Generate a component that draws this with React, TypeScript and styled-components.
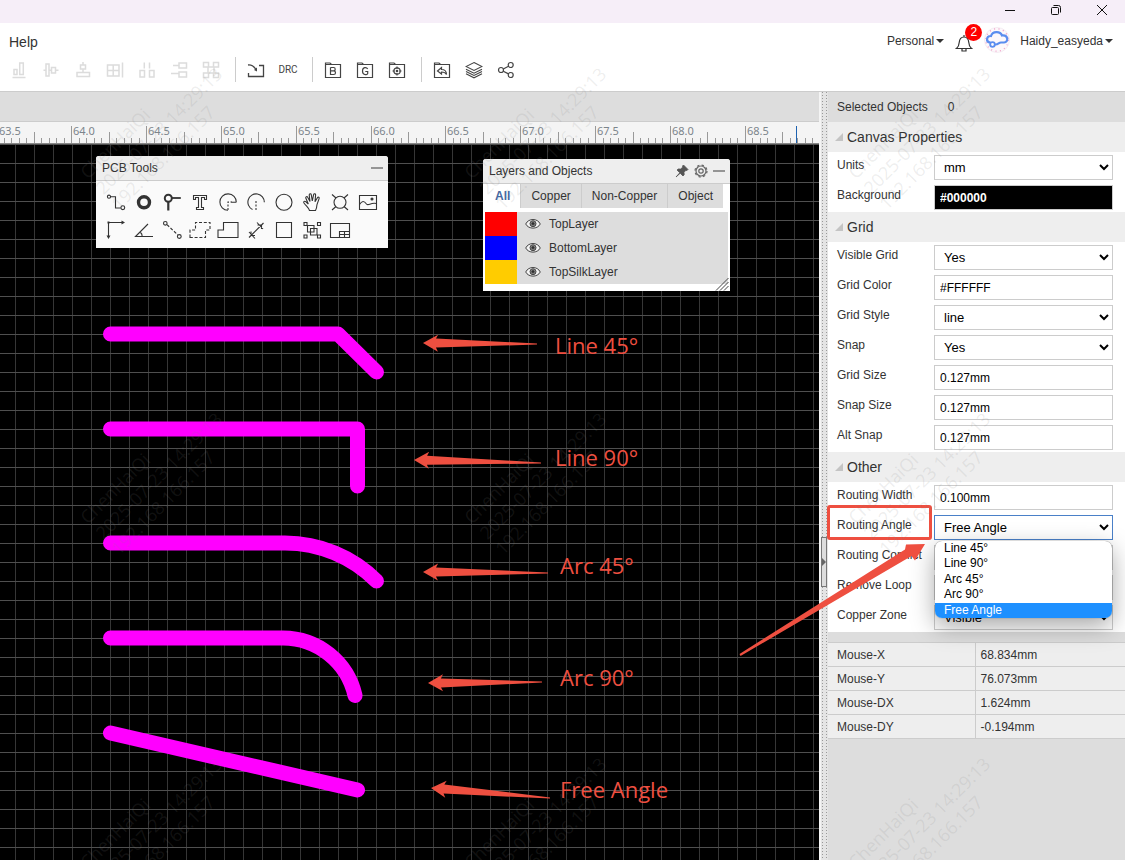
import React from "react";
import styled, { createGlobalStyle, css } from "styled-components";

const red = "#ee4f40";
const sans = `"Liberation Sans", Arial, sans-serif`;

const GlobalStyle = createGlobalStyle`
  *, *::before, *::after { box-sizing: border-box; }
  body { margin: 0; font: 12px/16px ${sans}; color: #333; background: #ddd; }
  button, input, select { font-family: inherit; }
  button { border: 0; padding: 0; background: none; color: inherit; }
`;

const Page = styled.div`
  position: relative;
  display: flex;
  flex-direction: column;
  min-height: 100vh;
  overflow: hidden;
`;

/* ---------- window frame ---------- */

const TitleBar = styled.div`
  display: flex;
  justify-content: flex-end;
  height: 23px;
  background: #f6eef8;
`;

const WindowButton = styled.button`
  display: grid;
  place-items: center;
  width: 46px;
  height: 20px;
`;

const Header = styled.header`
  display: flex;
  justify-content: space-between;
  height: 69px;
  background: #fff;
  border-bottom: 1px solid #ccc;
`;

const HeaderLeft = styled.div`
  display: flex;
  flex-direction: column;
`;

const MenuButton = styled.button`
  align-self: flex-start;
  padding: 0 9px;
  margin-top: 9px;
  height: 20px;
  font-size: 14px;
`;

const Toolbar = styled.div`
  display: flex;
  align-items: center;
  height: 36px;
  padding-left: 3px;
`;

const ToolbarButton = styled.button<{ $muted?: boolean }>`
  display: grid;
  place-items: center;
  width: 32px;
  height: 28px;
  color: ${(p) => (p.$muted ? "#dcdcdc" : "#444")};
`;

const DrcText = styled.span`
  font: 10px/12px Roboto, sans-serif;
`;

const Separator = styled.span`
  width: 1px;
  height: 25px;
  margin: 0 4px 2px 8px;
  background: #ccc;
`;

const Account = styled.div`
  display: flex;
  align-items: center;
  height: 36px;
  padding-right: 12px;
`;

const AccountButton = styled.button`
  display: flex;
  align-items: center;
  gap: 2px;
  font-size: 12px;
`;

const Caret = styled.span`
  border: 4px solid transparent;
  border-top-color: #333;
  border-bottom: 0;
`;

const BellButton = styled.button`
  position: relative;
  display: flex;
  margin: 4px 11px 0 11px;
`;

const Badge = styled.span`
  position: absolute;
  top: -10px;
  right: -9px;
  width: 17px;
  height: 17px;
  border-radius: 50%;
  background: #f00;
  color: #fff;
  font-size: 12px;
  line-height: 17px;
  text-align: center;
`;

const Avatar = styled.svg`
  margin: 0 10px 2px 0;
`;

/* ---------- work area ---------- */

const Body = styled.div`
  display: flex;
  flex: 1;
`;

const Workspace = styled.main`
  display: flex;
  flex: 1;
  flex-direction: column;
  min-width: 0;
`;

const TabStrip = styled.div`
  height: 30px;
  background: #ddd;
  border-bottom: 1px solid #ccc;
`;

const Ruler = styled.svg`
  display: block;
  width: 100%;
  height: 22px;
  background: #f4f4f4;
  border-bottom: 1px solid #888;
  font: 11px "Noto Sans", sans-serif;
`;

const Canvas = styled.div`
  position: relative;
  flex: 1;
  overflow: hidden;
  background-color: #000;
  background-image: linear-gradient(#4f4f4f 1px, transparent 1px),
    linear-gradient(90deg, #363636 1px, transparent 1px);
  background-size: 19px 19px;
  background-position: 15px 0;
`;

const Drawing = styled.svg`
  position: absolute;
  inset: 0;
  width: 100%;
  height: 100%;
`;

const Note = styled.span<{ $x: number; $y: number }>`
  position: absolute;
  left: ${(p) => p.$x}px;
  top: ${(p) => p.$y}px;
  color: ${red};
  font: 22px/30px "Open Sans", sans-serif;
  white-space: nowrap;
`;

const FloatPanel = styled.section<{ $x: number; $y: number; $w: number }>`
  position: absolute;
  left: ${(p) => p.$x}px;
  top: ${(p) => p.$y}px;
  width: ${(p) => p.$w}px;
  background: #fafafa;
  border-radius: 3px 3px 0 0;
`;

const PanelHeader = styled.header`
  display: flex;
  align-items: center;
  gap: 5px;
  height: 25px;
  padding: 0 5px 0 6px;
  background: #eee;
  border-bottom: 1px solid #ccc;
  border-radius: 3px 3px 0 0;
`;

const PanelTitle = styled.h2`
  flex: 1;
  margin: 0;
  font-size: 12px;
  font-weight: 400;
`;

const PanelButton = styled.button`
  display: flex;
`;

const ToolGrid = styled.div`
  display: grid;
  grid-template-columns: repeat(10, 28px);
  grid-auto-rows: 28px;
  padding: 7px 6px 4px;
`;

const ToolButton = styled.button`
  display: grid;
  place-items: center;
`;

const LayerBody = styled.div`
  padding: 0 2px 7px;
  background: #fff;
`;

const Tabs = styled.div`
  display: flex;
  gap: 1px;
  margin: 0 5px 4px 0;
  background: #ccc;
`;

const Tab = styled.button<{ $active?: boolean }>`
  flex: 1 1 auto;
  height: 24px;
  background: #ddd;
  font-size: 12px;
  ${(p) =>
    p.$active &&
    css`
      background: #fff;
      color: #4468a2;
      font-weight: 700;
    `}
`;

const LayerRow = styled.div`
  display: flex;
  align-items: center;
  height: 24px;
  background: #ddd;
`;

const Swatch = styled.span<{ $color: string }>`
  align-self: stretch;
  width: 32px;
  margin-right: 8px;
  background: ${(p) => p.$color};
`;

const EyeButton = styled.button`
  display: flex;
  margin-right: 8px;
`;

const ResizeGrip = styled.svg`
  position: absolute;
  right: 1px;
  bottom: 0;
`;

/* ---------- properties ---------- */

const Splitter = styled.div`
  position: relative;
  width: 9px;
  border-left: 2px solid #f4f4f4;
  background-image: linear-gradient(
      90deg,
      #e4e4e4 1px,
      transparent 1px 2px,
      #e4e4e4 2px 5px,
      transparent 5px 6px,
      #e4e4e4 6px
    ),
    linear-gradient(#999 1px, #e4e4e4 1px);
  background-size: 100% 3px;
`;

const Collapse = styled.button`
  position: absolute;
  top: 445px;
  left: 0;
  display: flex;
  align-items: center;
  width: 6px;
  height: 50px;
  background: #ddd;
  border: 1px solid #777;
`;

const CollapseMark = styled.span`
  border: 4px solid transparent;
  border-left-color: #666;
  border-right: 0;
`;

const Side = styled.aside`
  width: 297px;
  background: #ddd;
`;

const Selection = styled.p`
  display: flex;
  gap: 20px;
  margin: 0;
  padding: 0 9px;
  line-height: 30px;
`;

const Section = styled.section`
  background: #fff;
`;

const SectionTitle = styled.h3`
  display: flex;
  align-items: center;
  gap: 4px;
  height: 30px;
  margin: 0;
  padding-left: 7px;
  background: #eee;
  font-size: 14px;
  font-weight: 400;
`;

const Fold = styled.span`
  border: 4px solid #c4c4c4;
  border-left-color: transparent;
  border-top-color: transparent;
`;

const Row = styled.div`
  position: relative;
  display: grid;
  grid-template-columns: 97px 1fr;
  height: 30px;
  padding: 3px 12px 0 9px;
`;

const Label = styled.label`
  line-height: 20px;
`;

const control = css`
  width: 100%;
  height: 25px;
  border: 1px solid #ccc;
  border-radius: 0;
  background-color: #fff;
  color: #000;
  outline: 0;
`;

const TextInput = styled.input<{ $dark?: boolean }>`
  ${control}
  padding: 0 5px;
  font-size: 12px;
  ${(p) =>
    p.$dark &&
    css`
      background-color: #000;
      color: #fff;
      font-weight: 700;
    `}
`;

const Select = styled.select<{ $open?: boolean }>`
  ${control}
  padding: 0 0 0 5px;
  font-size: 13px;
  border-color: ${(p) => (p.$open ? "#4a80c8" : "#ccc")};
`;

const Options = styled.ul`
  position: absolute;
  z-index: 2;
  top: 29px;
  left: 107px;
  right: 13px;
  display: flex;
  flex-direction: column;
  height: 77px;
  margin: 0;
  padding: 0;
  overflow: hidden;
  list-style: none;
  color: #000;
  background: #fff;
  border-radius: 7px;
  box-shadow: 0 8px 24px rgba(0, 0, 0, 0.35), 0 0 1px rgba(0, 0, 0, 0.6);
`;

const Option = styled.li<{ $active: boolean }>`
  flex: 1;
  padding-left: 9px;
  line-height: 15px;
  ${(p) =>
    p.$active &&
    css`
      background: #1e90ff;
      color: #fff;
    `}
`;

const Highlight = styled.span`
  position: absolute;
  z-index: 3;
  top: -7px;
  left: -1px;
  width: 105px;
  height: 35px;
  border: 3px solid ${red};
  border-radius: 3px;
  pointer-events: none;
`;

const Pointer = styled.svg`
  position: absolute;
  z-index: 3;
  top: 30px;
  left: -90px;
  pointer-events: none;
`;

const MouseTable = styled.table`
  width: 100%;
  margin-top: 10px;
  border-collapse: collapse;
  background: #eee;

  th,
  td {
    height: 24px;
    padding: 0 0 0 5px;
    border: solid #ccc;
    border-width: 1px 0;
    font-weight: 400;
    text-align: left;
  }
  th {
    width: 147px;
    padding-left: 9px;
    border-right-width: 1px;
  }
`;

/* ---------- watermark ---------- */

const Watermarks = styled.div`
  position: absolute;
  z-index: 5;
  inset: 0;
  overflow: hidden;
  pointer-events: none;
`;

const Watermark = styled.div<{ $col: number; $row: number }>`
  position: absolute;
  left: ${(p) => 73 + p.$col * 384}px;
  top: ${(p) => 96 + p.$row * 345}px;
  width: 174px;
  transform: rotate(-45deg);
  color: rgba(128, 128, 128, 0.14);
  font: 18px/22px "Open Sans", sans-serif;
  white-space: nowrap;
`;

/* ---------- icons ---------- */

const Icon = ({ size = 18, box = "0 0 18 18", sw = 1.2, children }: {
  size?: number; box?: string; sw?: number; children: React.ReactNode;
}) => (
  <svg width={size} height={size} viewBox={box} fill="none" stroke="currentColor" strokeWidth={sw} aria-hidden="true">
    {children}
  </svg>
);

const alignIcons: [string, React.ReactNode][] = [
  ["Align bottom", <path d="M2.5 16.5h13M4 8.500h3v5H4zM9.700 2h3.600v11.500H9.700z" />],
  ["Align middle", <path d="M4 3h3v12H4zM9.500 6.500h4v5.500h-4zM1.500 9.200H4M7 9.200h2.500M13.500 9.200h3" />],
  ["Align center", <path d="M6.500 4h5v4h-5zM3 11.500h12.500v4H3zM9 1v3M9 8v3.500" />],
  ["Align grid", <path d="M1.500 4h11.500v11H1.500zM1.500 9.500H13M7.200 4v11M16.500 1.500v15" />],
  ["Distribute horizontally", <path d="M2 9.500h4.500v6.500H2zM11.500 9.500H16v6.500h-4.500zM6.300 1.500v6M11.500 1.500v6" />],
  ["Distribute vertically", <path d="M9 2h7.500v5H9zM9 11h7.500v5H9zM3 4.500h6M1 12.500h8" />],
  ["Array", <path d="M1.500 1.500h5v4.500h-5zM11.500 1.500h5v4.500h-5zM1.500 12h5v4.500h-5zM11.500 12h5v4.500h-5zM6 6h6v6H6z" />],
];

const folder = <path d="M1.500 16.500V2h4.500l1.500 1.500h9v13zM1.500 3.500h6" />;

const toolIcons: [string, React.ReactNode][] = [
  ["Track", <><circle cx="3" cy="4.700" r="1.600" /><path d="M4.800 4.700h4.700V16h5.300" /><circle cx="16.800" cy="15.700" r="1.900" /></>],
  ["Pad", <circle cx="10" cy="10.300" r="5.500" strokeWidth="3.400" />],
  ["Via", <><circle cx="6.300" cy="6.200" r="3.500" strokeWidth="2" /><path d="M9.800 6h9" strokeWidth="1.800" /><path d="M6.300 9.500v9" strokeWidth="2.200" /></>],
  ["Text", <path d="M3.500 3.500h13v4h-2v-2h-3v10h2v2h-7v-2h2v-10h-3v2h-2z" />],
  ["Arc by center", <><path d="M18.300 10.300A8.200 8.200 0 1 0 10 18.300M18.300 10.300h-5" /><path d="M10 18v-8h4" strokeDasharray="2 1.500" /></>],
  ["Arc", <><path d="M18.300 10.300A8.200 8.200 0 1 0 6.500 17.500" /><path d="M10 18v-9" strokeDasharray="2 1.500" /></>],
  ["Circle", <circle cx="10" cy="10.300" r="8" />],
  ["Drag", <path d="M7.500 18.500C6.500 15.500 4 14 1.800 10.800c-.5-1.200.9-2 1.900-1.100L6.300 12 3.800 6c-.4-1.300 1.300-1.900 1.900-.7L8 9.500 7.200 2.900c0-1.400 1.900-1.500 2.100-.1L10.300 9l1.300-6.400c.4-1.300 2.200-.9 2 .4L13 9.700l2.400-4c.8-1.100 2.200-.3 1.700.9L15 12.500c-.2 2.500-.5 4.500-1.500 6z" />],
  ["Hole", <><circle cx="10" cy="10.300" r="6" /><path d="M2 2.500l4 3.500M18 2.500 14 6M2 18l4-3.500M18 18l-4-3.500" /></>],
  ["Image", <><path d="M1.500 3.500h17v14h-17z" /><path d="M1.500 12.500C4 8.500 6 8.500 8.500 12c2 2.500 4-2 10-.5" /><circle cx="14" cy="7" r="1" fill="currentColor" /></>],
  ["Canvas origin", <><path d="M2.500 2.500h15M2.500 2.500v15" /><path d="M15.500.5l3.500 2-3.500 2zM.5 15.500l2 3.500 2-3.500zM1.500 1.500h2v2h-2z" fill="currentColor" stroke="none" /></>],
  ["Protractor", <path d="M14 4 1.500 16.500H19M6.500 12.500c1.300 1 1.700 2.200 1.700 4" />],
  ["Connect pads", <><circle cx="3.300" cy="3.300" r="1.800" /><circle cx="17.300" cy="16.500" r="1.900" /><path d="M5 4.700 16 15" strokeDasharray="3 1.800" /></>],
  ["Copper area", <path d="M0 17.500V10h5.500V2.500H20V10h-4.500v7.500z" strokeDasharray="3 1.800" />],
  ["Solid region", <path d="M0 17.500V10h5.500V2.500H20v15z" />],
  ["Dimension", <path d="M5 15.500 15.500 5M3 12l6 6.500M11 2.500l6 6.500M4.500 10.500v0M5 11.500v4h4M11.500 5h4v4M15.500 5l2-2M5 15.500l-2 2" />],
  ["Rectangle", <path d="M2.500 2.500h15v15h-15z" />],
  ["Group", <><path d="M2 2.500h3v3H2zM15.500 2.500h3v3h-3zM2 15h3v3H2zM15.500 15h3v3h-3z" /><path d="M5.500 5.500h6.500v6.500H5.500zM8.500 8.500H15v6.500H8.500z" /></>],
  ["Panelize", <path d="M.5 3.500h19v14H.5zM9.500 17.500v-6h10M9.500 14.500h10M14.500 11.500v6" />],
];

/* ---------- data ---------- */

const layers = [
  ["TopLayer", "#ff0000"],
  ["BottomLayer", "#0000ff"],
  ["TopSilkLayer", "#ffcc00"],
];

type Field = { label: string; value: string; kind?: "select" | "dark"; open?: boolean };

const sections: { title: string; fields: Field[] }[] = [
  {
    title: "Canvas Properties",
    fields: [
      { label: "Units", value: "mm", kind: "select" },
      { label: "Background", value: "#000000", kind: "dark" },
    ],
  },
  {
    title: "Grid",
    fields: [
      { label: "Visible Grid", value: "Yes", kind: "select" },
      { label: "Grid Color", value: "#FFFFFF" },
      { label: "Grid Style", value: "line", kind: "select" },
      { label: "Snap", value: "Yes", kind: "select" },
      { label: "Grid Size", value: "0.127mm" },
      { label: "Snap Size", value: "0.127mm" },
      { label: "Alt Snap", value: "0.127mm" },
    ],
  },
  {
    title: "Other",
    fields: [
      { label: "Routing Width", value: "0.100mm" },
      { label: "Routing Angle", value: "Free Angle", kind: "select", open: true },
      { label: "Routing Conflict", value: "", kind: "select" },
      { label: "Remove Loop", value: "", kind: "select" },
      { label: "Copper Zone", value: "Visible", kind: "select" },
    ],
  },
];

const angles = ["Line 45°", "Line 90°", "Arc 45°", "Arc 90°", "Free Angle"];

const mouse = [
  ["Mouse-X", "68.834mm"],
  ["Mouse-Y", "76.073mm"],
  ["Mouse-DX", "1.624mm"],
  ["Mouse-DY", "-0.194mm"],
];

// label, label position, arrow tip and arrow tail, in canvas pixels
const notes: [string, number, number, number, number, number, number][] = [
  ["Line 45°", 555, 186, 423, 199, 537, 200],
  ["Line 90°", 555, 298, 414, 316, 541, 319],
  ["Arc 45°", 560, 406, 423, 428, 548, 429],
  ["Arc 90°", 560, 518, 428, 539, 542, 538],
  ["Free Angle", 560, 630, 431, 644, 550, 654],
];

const traces = [
  "M110.500 190H338L376.500 228",
  "M110.500 285H357.500V342",
  "M110.500 399H285A129.500 129.500 0 0 1 376.500 437",
  "M110.500 494H283A74 74 0 0 1 355 551.500",
  "M110.500 589 357.500 646",
];

const Arrow = ({ x1, y1, x2, y2 }: { x1: number; y1: number; x2: number; y2: number }) => {
  const len = Math.hypot(x2 - x1, y2 - y1);
  const deg = (Math.atan2(y2 - y1, x2 - x1) * 180) / Math.PI;
  return (
    <path
      d={`M0 0 15 -8.500 13 -4.500 ${len} -.5V.5L13 4.500 15 8.500Z`}
      transform={`translate(${x1} ${y1}) rotate(${deg})`}
      fill={red}
    />
  );
};

const rulerStart = -3.5;
const rulerStep = 74.83;

const RulerScale = () => (
  <Ruler aria-label="Horizontal ruler">
    {Array.from({ length: 110 }, (_, i) => {
      const h = i % 10 === 0 ? 18 : i % 5 === 0 ? 12 : 6;
      const x = Math.round(rulerStart + (i * rulerStep) / 10) + 0.5;
      return <path key={i} d={`M${x} 22v-${h}`} stroke="#999" />;
    })}
    {Array.from({ length: 11 }, (_, i) => (
      <text key={i} x={Math.round(rulerStart + i * rulerStep) + 2} y="13" fill="#7c858c">
        {(63.5 + i * 0.5).toFixed(1)}
      </text>
    ))}
    <path d="M796.500 4v18" stroke="#1e62b0" />
  </Ruler>
);

const FieldRow = ({ label, value, kind, open }: Field) => {
  const id = label.toLowerCase().replace(/ /g, "-");
  return (
    <Row>
      <Label htmlFor={id}>{label}</Label>
      {kind === "select" ? (
        <Select id={id} defaultValue={value} $open={open}>
          {open ? angles.map((a) => <option key={a}>{a}</option>) : <option>{value}</option>}
        </Select>
      ) : (
        <TextInput id={id} defaultValue={value} $dark={kind === "dark"} />
      )}
      {open && (
        <>
          <Options role="listbox" aria-label={label}>
            {angles.map((a) => (
              <Option key={a} role="option" aria-selected={a === value} $active={a === value}>
                {a}
              </Option>
            ))}
          </Options>
          <Highlight />
          <Pointer width="190" height="116" aria-hidden="true">
            <path d="M187 2 177 18.500 173.500 14 2.500 114 1.500 112 167 7.500 168 2.500Z" fill={red} />
          </Pointer>
        </>
      )}
    </Row>
  );
};

export default function App() {
  return (
    <Page>
      <GlobalStyle />
      <TitleBar>
        <WindowButton aria-label="Minimize">
          <svg width="12" height="12" stroke="#111"><path d="M1 6.500h10" /></svg>
        </WindowButton>
        <WindowButton aria-label="Restore">
          <svg width="12" height="12" stroke="#111" fill="none">
            <rect x="1.500" y="3.500" width="7" height="7" rx="1" />
            <path d="M3.500 1.500h5a2 2 0 0 1 2 2v5" />
          </svg>
        </WindowButton>
        <WindowButton aria-label="Close">
          <svg width="12" height="12" stroke="#111"><path d="M1 1l10 10M11 1 1 11" /></svg>
        </WindowButton>
      </TitleBar>

      <Header>
        <HeaderLeft>
          <MenuButton>Help</MenuButton>
          <Toolbar>
            {alignIcons.map(([name, art]) => (
              <ToolbarButton key={name} aria-label={name} $muted>
                <Icon sw={1.5}>{art}</Icon>
              </ToolbarButton>
            ))}
            <Separator />
            <ToolbarButton aria-label="Import changes">
              <Icon sw={1.3}>
                <path d="M1.500 12v3.500h15v-11H12M1 4c4-.5 6 1.500 8 4.500" />
                <path d="M10 10.500 7 9l3-2.500z" fill="currentColor" stroke="none" />
              </Icon>
            </ToolbarButton>
            <ToolbarButton><DrcText>DRC</DrcText></ToolbarButton>
            <Separator />
            <ToolbarButton aria-label="BOM">
              <Icon>{folder}<path d="M6.500 6.500h3.200c2 0 2 3.300 0 3.300H6.500M9.700 9.800c2.400 0 2.400 3.700 0 3.700H6.500v-7" /></Icon>
            </ToolbarButton>
            <ToolbarButton aria-label="Gerber">
              <Icon>{folder}<path d="M11.700 8c-1.200-2.200-5.200-2-5.200 2s4.200 4.500 5.200 2.500v-2H9.300" /></Icon>
            </ToolbarButton>
            <ToolbarButton aria-label="Pick and place">
              <Icon>{folder}<circle cx="9" cy="10" r="3.200" /><circle cx="9" cy="10" r=".7" /><path d="M9 5.500V8M9 12v2.500M4.500 10H7M11 10h2.500" /></Icon>
            </ToolbarButton>
            <Separator />
            <ToolbarButton aria-label="History">
              <Icon>{folder}<path d="M4.500 10 8.500 6.500v2c3.500 0 5 2 5 5-1-2-2.500-2.500-5-2.500v2z" /></Icon>
            </ToolbarButton>
            <ToolbarButton aria-label="Layers">
              <Icon sw={1.1}><path d="M9 1.500 17 5.500 9 9.500 1 5.500zM1 8.200l8 4 8-4M1 10.500l8 4 8-4M1 12.800l8 4 8-4" /></Icon>
            </ToolbarButton>
            <ToolbarButton aria-label="Share">
              <Icon><circle cx="4" cy="9" r="2.500" /><circle cx="13.700" cy="4" r="2.500" /><circle cx="13.700" cy="14" r="2.500" /><path d="M6.300 8 11.500 5.200M6.300 10.200l5.200 2.700" /></Icon>
            </ToolbarButton>
          </Toolbar>
        </HeaderLeft>
        <Account>
          <AccountButton>Personal<Caret /></AccountButton>
          <BellButton aria-label="Notifications, 2 new">
            <Icon size={18} sw={1.200}>
              <path d="M1.500 14.500c2-1.500 2.500-3 2.700-6C4.500 5 6 3 9 3s4.500 2 4.800 5.500c.2 3 .7 4.500 2.700 6zM7 14.500v2.500h4v-2.500M9 1v2" />
            </Icon>
            <Badge>2</Badge>
          </BellButton>
          <Avatar width="26" height="26" viewBox="0 0 26 26" fill="none" aria-hidden="true">
            <circle cx="13" cy="13" r="12.500" fill="#fdf8fb" stroke="#f4ecf2" />
            <circle cx="13" cy="13" r="11.200" stroke="#ee9cc6" strokeWidth="1.300" strokeDasharray="1 3.500" />
            <path
              d="M6 15.500C1.800 15 2 8.800 7 9 8.500 4 16.200 3.800 18 8.500c6.200-.8 7 6.500 2 7h-3c-2.500 0-2.500 2.300-6 2"
              stroke="#5b8def"
              strokeWidth="2.200"
              strokeLinecap="round"
            />
            <circle cx="8.500" cy="17.500" r="2.300" stroke="#5b8def" strokeWidth="1.800" />
          </Avatar>
          <AccountButton>Haidy_easyeda<Caret /></AccountButton>
        </Account>
      </Header>

      <Body>
        <Workspace>
          <TabStrip />
          <RulerScale />
          <Canvas>
            <Drawing aria-hidden="true">
              <g fill="none" stroke="#f0f" strokeWidth="15" strokeLinecap="round" strokeLinejoin="round">
                {traces.map((d) => <path key={d} d={d} />)}
              </g>
              {notes.map(([name, , , x1, y1, x2, y2]) => (
                <Arrow key={name} x1={x1} y1={y1} x2={x2} y2={y2} />
              ))}
            </Drawing>
            {notes.map(([name, x, y]) => <Note key={name} $x={x} $y={y}>{name}</Note>)}

            <FloatPanel $x={96} $y={12} $w={292}>
              <PanelHeader>
                <PanelTitle>PCB Tools</PanelTitle>
                <PanelButton aria-label="Collapse tools">
                  <svg width="12" height="14" stroke="#777" strokeWidth="1.500"><path d="M0 7h12" /></svg>
                </PanelButton>
              </PanelHeader>
              <ToolGrid>
                {toolIcons.map(([name, art]) => (
                  <ToolButton key={name} aria-label={name}>
                    <Icon size={22} box="-1 -1 22 22" sw={1.1}>{art}</Icon>
                  </ToolButton>
                ))}
              </ToolGrid>
            </FloatPanel>

            <FloatPanel $x={483} $y={15} $w={247}>
              <PanelHeader>
                <PanelTitle>Layers and Objects</PanelTitle>
                <PanelButton aria-label="Pin">
                  <svg width="14" height="14" viewBox="0 0 14 14" fill="#555">
                    <path d="M8.500 1 13 5.500 12 6.500 11 6.200 9 8.300 9.200 10.800 8 12 5.200 9.200 1 13 4.800 8.800 2 6 3.200 5 5.700 5 7.800 3 7.500 2Z" stroke="#555" strokeWidth=".8" strokeLinejoin="round" />
                  </svg>
                </PanelButton>
                <PanelButton aria-label="Layer settings">
                  <svg width="14" height="14" viewBox="0 0 14 14" fill="none" stroke="#666">
                    <circle cx="7" cy="7" r="5" strokeWidth="1.200" />
                    <circle cx="7" cy="7" r="6" strokeWidth="1.200" strokeDasharray="2.350 2.350" />
                    <circle cx="7" cy="7" r="2.200" strokeWidth="1.200" />
                  </svg>
                </PanelButton>
                <PanelButton aria-label="Collapse layers">
                  <svg width="12" height="14" stroke="#777" strokeWidth="1.500"><path d="M0 7h12" /></svg>
                </PanelButton>
              </PanelHeader>
              <LayerBody>
                <Tabs>
                  <Tab $active>All</Tab>
                  <Tab>Copper</Tab>
                  <Tab>Non-Copper</Tab>
                  <Tab>Object</Tab>
                </Tabs>
                {layers.map(([name, color]) => (
                  <LayerRow key={name}>
                    <Swatch $color={color} />
                    <EyeButton aria-label={`Toggle ${name}`}>
                      <svg width="16" height="12" viewBox="0 0 16 12" fill="none" stroke="#444">
                        <path d="M.7 6C3.500 0 12.500 0 15.300 6 12.500 11.500 3.500 11.500.7 6Z" fill="#f4f4f4" />
                        <circle cx="8" cy="5.700" r="3" fill="#888" />
                        <circle cx="8" cy="5.700" r="1.200" fill="#222" />
                      </svg>
                    </EyeButton>
                    {name}
                  </LayerRow>
                ))}
              </LayerBody>
              <ResizeGrip width="14" height="14" stroke="#444" aria-hidden="true">
                <path d="M1 13.500 13.500 1M5 13.500 13.500 5M9 13.500 13.500 9" />
              </ResizeGrip>
            </FloatPanel>
          </Canvas>
        </Workspace>

        <Splitter>
          <Collapse aria-label="Collapse panel"><CollapseMark /></Collapse>
        </Splitter>

        <Side>
          <Selection><span>Selected Objects</span><span>0</span></Selection>
          {sections.map((s) => (
            <Section key={s.title}>
              <SectionTitle><Fold />{s.title}</SectionTitle>
              {s.fields.map((f) => <FieldRow key={f.label} {...f} />)}
            </Section>
          ))}
          <MouseTable>
            <tbody>
              {mouse.map(([name, value]) => (
                <tr key={name}><th scope="row">{name}</th><td>{value}</td></tr>
              ))}
            </tbody>
          </MouseTable>
        </Side>
      </Body>

      <Watermarks aria-hidden="true">
        {[0, 1, 2].map((row) =>
          [0, 1, 2].map((col) => (
            <Watermark key={`${row}-${col}`} $row={row} $col={col}>
              ChenHaiQi<br />2025-07-23 14:29:13<br />192.168.166.157
            </Watermark>
          ))
        )}
      </Watermarks>
    </Page>
  );
}
